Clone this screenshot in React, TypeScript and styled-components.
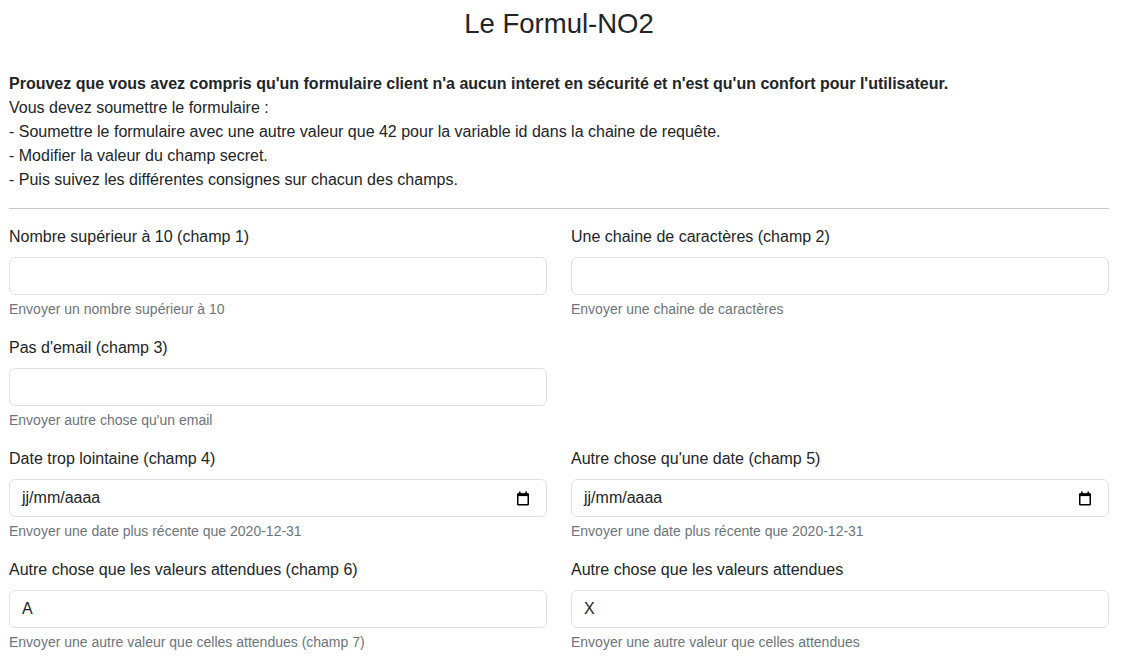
import styled, { createGlobalStyle } from "styled-components";

const colors = {
  text: "#212529",
  muted: "#6c757d",
  border: "#dee2e6",
  rule: "#c8c9ca",
};

const GlobalStyle = createGlobalStyle`
  *, *::before, *::after { box-sizing: border-box; }
  body {
    margin: 0;
    background: #fff;
    color: ${colors.text};
    font-family: "Liberation Sans", Arial, sans-serif;
    font-size: 16px;
    line-height: 1.5;
  }
`;

const Page = styled.main`
  padding: 7px 14px 0 9px;
`;

const Title = styled.h1`
  margin: 0 0 32px;
  font-size: 27.5px;
  font-weight: 400;
  line-height: 1.2;
  text-align: center;
`;

const Intro = styled.div`
  p {
    margin: 0;
  }
  strong {
    font-weight: 700;
  }
`;

const Rule = styled.hr`
  margin: 16px 0;
  border: 0;
  border-top: 1px solid ${colors.rule};
`;

const Row = styled.div`
  display: grid;
  grid-template-columns: 1fr 1fr;
  column-gap: 24px;
`;

const Field = styled.div`
  margin-bottom: 16px;
`;

const Label = styled.label`
  display: block;
  margin-bottom: 8px;
`;

const Input = styled.input`
  display: block;
  width: 100%;
  height: 38px;
  padding: 6px 12px;
  font-family: inherit;
  font-size: 16px;
  line-height: 1.5;
  color: ${colors.text};
  background: #fff;
  border: 1px solid ${colors.border};
  border-radius: 6px;
  outline: none;
`;

const DateBox = styled.div`
  display: flex;
  align-items: center;
  justify-content: space-between;
  height: 38px;
  padding: 6px 16px 6px 12px;
  border: 1px solid ${colors.border};
  border-radius: 6px;
  background: #fff;
`;

const Help = styled.div`
  margin-top: 4px;
  font-size: 14px;
  line-height: 1.5;
  color: ${colors.muted};
`;

const CalendarIcon = () => (
  <svg width="14" height="15" viewBox="0 0 14 15" aria-hidden="true">
    <rect x="3" y="0.5" width="1.6" height="3" fill="#000" />
    <rect x="9.4" y="0.5" width="1.6" height="3" fill="#000" />
    <rect x="1.5" y="2.5" width="11" height="2.6" fill="#000" />
    <rect x="1.75" y="3" width="10.5" height="10.75" rx="0.6" fill="none" stroke="#000" strokeWidth="1.5" />
  </svg>
);

type FieldProps = {
  label: string;
  help: string;
  kind?: "text" | "date";
  value?: string;
};

const FormField = ({ label, help, kind = "text", value }: FieldProps) => (
  <Field>
    <Label>{label}</Label>
    {kind === "date" ? (
      <DateBox>
        <span>jj/mm/aaaa</span>
        <CalendarIcon />
      </DateBox>
    ) : (
      <Input type="text" defaultValue={value} />
    )}
    <Help>{help}</Help>
  </Field>
);

export default function App() {
  return (
    <>
      <GlobalStyle />
      <Page>
        <Title>Le Formul-NO2</Title>
        <Intro>
          <p>
            <strong>
              Prouvez que vous avez compris qu'un formulaire client n'a aucun interet en sécurité et
              n'est qu'un confort pour l'utilisateur.
            </strong>
          </p>
          <p>Vous devez soumettre le formulaire :</p>
          <p>- Soumettre le formulaire avec une autre valeur que 42 pour la variable id dans la chaine de requête.</p>
          <p>- Modifier la valeur du champ secret.</p>
          <p>- Puis suivez les différentes consignes sur chacun des champs.</p>
        </Intro>
        <Rule />
        <Row>
          <FormField label="Nombre supérieur à 10 (champ 1)" help="Envoyer un nombre supérieur à 10" />
          <FormField label="Une chaine de caractères (champ 2)" help="Envoyer une chaine de caractères" />
          <FormField label="Pas d'email (champ 3)" help="Envoyer autre chose qu'un email" />
          <div />
          <FormField
            label="Date trop lointaine (champ 4)"
            help="Envoyer une date plus récente que 2020-12-31"
            kind="date"
          />
          <FormField
            label="Autre chose qu'une date (champ 5)"
            help="Envoyer une date plus récente que 2020-12-31"
            kind="date"
          />
          <FormField
            label="Autre chose que les valeurs attendues (champ 6)"
            help="Envoyer une autre valeur que celles attendues (champ 7)"
            value="A"
          />
          <FormField
            label="Autre chose que les valeurs attendues"
            help="Envoyer une autre valeur que celles attendues"
            value="X"
          />
        </Row>
      </Page>
    </>
  );
}
